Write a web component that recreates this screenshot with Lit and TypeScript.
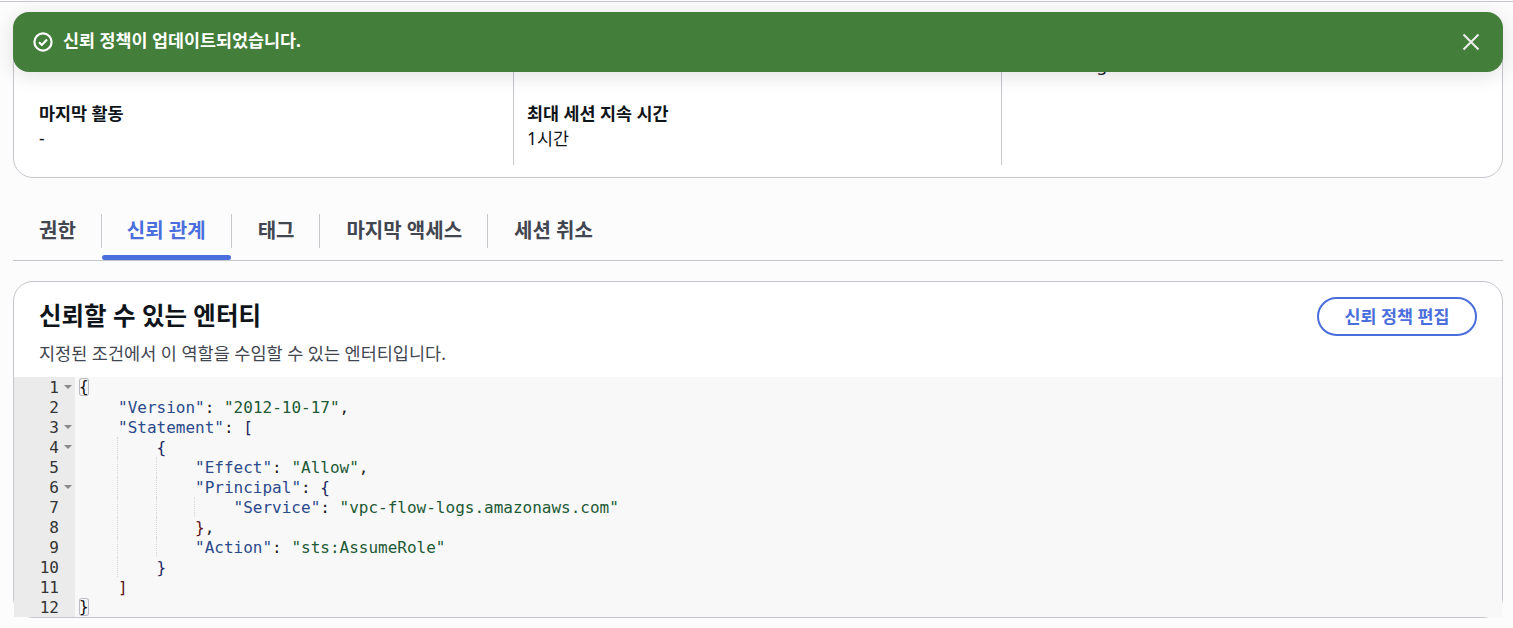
import { LitElement, html, css } from "lit";
import { customElement } from "lit/decorators.js";

type Tok = [string, string];
interface Line { fold?: boolean; indent: number; toks: Tok[] }

const lines: Line[] = [
  { fold: true, indent: 0, toks: [["{", "m"]] },
  { indent: 1, toks: [['"Version"', "k"], [": ", "p"], ['"2012-10-17"', "s"], [",", "p"]] },
  { fold: true, indent: 1, toks: [['"Statement"', "k"], [": ", "p"], ["[", "n"]] },
  { fold: true, indent: 2, toks: [["{", "n"]] },
  { indent: 3, toks: [['"Effect"', "k"], [": ", "p"], ['"Allow"', "s"], [",", "p"]] },
  { fold: true, indent: 3, toks: [['"Principal"', "k"], [": ", "p"], ["{", "n"]] },
  { indent: 4, toks: [['"Service"', "k"], [": ", "p"], ['"vpc-flow-logs.amazonaws.com"', "s"]] },
  { indent: 3, toks: [["}", "r"], [",", "p"]] },
  { indent: 3, toks: [['"Action"', "k"], [": ", "p"], ['"sts:AssumeRole"', "s"]] },
  { indent: 2, toks: [["}", "n"]] },
  { indent: 1, toks: [["]", "r"]] },
  { indent: 0, toks: [["}", "m"]] },
];

const tabs = [
  { label: "권한", cls: "t1" },
  { label: "신뢰 관계", cls: "t2 active" },
  { label: "태그", cls: "t3" },
  { label: "마지막 액세스", cls: "t4" },
  { label: "세션 취소", cls: "t5" },
];

@customElement("app-root")
export class AppRoot extends LitElement {
  static styles = css`
    :host {
      display: block;
      position: relative;
      height: 628px;
      overflow: hidden;
      background: #fcfcfc;
      font-family: "Noto Sans", "Noto Sans CJK KR", sans-serif;
      font-size: 17.4px;
      color: #0f141a;
    }
    .topline { height: 1px; margin-top: 1px; background: #c6c6cd; }
    .flash {
      position: absolute;
      left: 13px;
      top: 12px;
      width: 1490px;
      height: 60px;
      box-sizing: border-box;
      padding: 0 23px 0 20px;
      display: flex;
      align-items: center;
      gap: 10px;
      border-radius: 16px;
      background: #437f3a;
      color: #fff;
      font-weight: 700;
      box-shadow: 0 4px 20px rgba(0, 7, 22, 0.12);
    }
    .flash .msg { flex: 1; line-height: 56px; margin-top: -5px; }
    .summary {
      margin: 20px 10px 0 13px;
      height: 156px;
      box-sizing: border-box;
      border: 1px solid #c6c6cd;
      border-radius: 20px;
      background: #fff;
      padding-bottom: 12px;
      display: grid;
      grid-template-columns: 500px 488px 1fr;
    }
    .col {
      display: flex;
      flex-direction: column;
      justify-content: flex-end;
      padding: 0 0 14px 13px;
      border-right: 1px solid #c6c6cd;
    }
    .col:first-child { padding-left: 25px; }
    .col:last-child { border-right: 0; justify-content: flex-start; padding-top: 29px; }
    .label { font-weight: 700; line-height: 26px; }
    .value { line-height: 26px; margin-top: -1px; color: #0f141a; }
    .tabs {
      margin: 36px 10px 0 13px;
      display: flex;
      border-bottom: 1px solid #c6c6cd;
    }
    .tab { display: flex; flex-direction: column; }
    .tab .name {
      height: 34px;
      line-height: 34px;
      border-right: 1px solid #c6c6cd;
      font-size: 20px;
      font-weight: 700;
      color: #424650;
      white-space: nowrap;
    }
    .tab:last-child .name { border-right: 0; }
    .tab .bar { height: 5px; margin-top: 7px; margin-right: 1px; }
    .t1 .name { padding: 0 25px 0 26px; }
    .t2 .name { padding: 0 25px; }
    .t3 .name, .t4 .name, .t5 .name { padding: 0 25px 0 26px; }
    .active .name { color: #4a6fdc; }
    .active .bar { background: #4a6edb; border-radius: 3px; }
    .card {
      margin: 20px 10px 0 13px;
      height: 337px;
      box-sizing: border-box;
      border: 1px solid #c6c6cd;
      border-radius: 20px;
      background: #fff;
    }
    .head {
      height: 95px;
      box-sizing: border-box;
      padding: 15px 25px 0;
      display: flex;
      justify-content: space-between;
      align-items: flex-start;
    }
    h2 {
      margin: 4px 0 0;
      font-size: 24.5px;
      line-height: 30px;
      font-weight: 700;
      color: #0f141a;
    }
    .sub { margin-top: 10px; line-height: 24px; color: #424650; font-size: 17.5px; }
    .btn {
      width: 160px;
      height: 39px;
      box-sizing: border-box;
      border: 2px solid #4a6edb;
      border-radius: 20px;
      background: #fff;
      color: #4a6edb;
      font: 700 17.4px "Noto Sans", "Noto Sans CJK KR", sans-serif;
      padding: 0 0 3px;
    }
    .editor {
      height: 240px;
      background: #f8f8f8;
      font-family: "DejaVu Sans Mono", monospace;
      font-size: 16px;
      line-height: 20px;
      overflow: hidden;
    }
    .row { display: flex; height: 20px; }
    .gut {
      flex: none;
      width: 61px;
      box-sizing: border-box;
      padding-top: 1px;
      display: flex;
      align-items: center;
      background: #ebebeb;
      color: #333;
    }
    .num { width: 45px; text-align: right; }
    .arrow {
      margin-left: 5px;
      width: 0;
      height: 0;
      border-left: 4px solid transparent;
      border-right: 4px solid transparent;
      border-top: 4px solid #8a8a8a;
      margin-top: -2px;
    }
    .code { padding-left: 4.5px; white-space: pre; display: flex; }
    .code .txt { padding-top: 1px; }
    .ind { flex: none; width: 38.53px; height: 20px; box-sizing: border-box; }
    .ind.g { width: 39.53px; margin-left: -1px; border-left: 1px dotted #d8d8d8; }
    .k { color: #2b4a8b; }
    .s { color: #1d5a35; }
    .p { color: #222; }
    .n { color: #1c2760; }
    .r { color: #5c1414; }
    .code .m {
      color: #111;
      display: block;
      height: 18px;
      line-height: 18px;
      padding-top: 0;
      margin: 1px 0 0 -0.5px;
      border-radius: 3px;
      box-shadow: inset 0 0 0 1px #b9b9c2;
    }
  `;

  private guideCount(i: number, l: Line) {
    return i >= 3 && i <= 9 ? l.indent - 1 : 0;
  }

  private renderLine(l: Line, i: number) {
    const guides = this.guideCount(i, l);
    return html`<div class="row">
      <div class="gut"><span class="num">${i + 1}</span>${l.fold ? html`<span class="arrow"></span>` : ""}</div>
      <div class="code">${Array.from({ length: l.indent }, (_, d) =>
        html`<span class="ind ${d > 0 && d <= guides ? "g" : ""}"></span>`
      )}${l.toks.map(([t, c]) => html`<span class="txt ${c}">${t}</span>`)}</div>
    </div>`;
  }

  render() {
    return html`
      <div class="topline"></div>
      <section class="summary">
        <div class="col">
          <div class="label">마지막 활동</div>
          <div class="value">-</div>
        </div>
        <div class="col">
          <div class="label">최대 세션 지속 시간</div>
          <div class="value">1시간</div>
        </div>
        <div class="col">
          <div class="value">role-for-logs</div>
        </div>
      </section>
      <nav class="tabs">
        ${tabs.map((t) => html`<div class="tab ${t.cls}"><div class="name">${t.label}</div><div class="bar"></div></div>`)}
      </nav>
      <section class="card">
        <div class="head">
          <div>
            <h2>신뢰할 수 있는 엔터티</h2>
            <div class="sub">지정된 조건에서 이 역할을 수임할 수 있는 엔터티입니다.</div>
          </div>
          <button class="btn">신뢰 정책 편집</button>
        </div>
        <div class="editor">${lines.map((l, i) => this.renderLine(l, i))}</div>
      </section>
      <div class="flash">
        <svg width="20" height="20" viewBox="0 0 20 20" fill="none" stroke="#fff" stroke-width="2.2">
          <circle cx="10" cy="10" r="8.6"></circle>
          <path d="M6 10.2l2.8 2.8L14 7.6" stroke-linejoin="round"></path>
        </svg>
        <div class="msg">신뢰 정책이 업데이트되었습니다.</div>
        <svg width="18" height="18" viewBox="0 0 18 18" fill="none" stroke="#eee" stroke-width="2">
          <path d="M1.5 1.5l15 15M16.5 1.5l-15 15"></path>
        </svg>
      </div>
    `;
  }
}
